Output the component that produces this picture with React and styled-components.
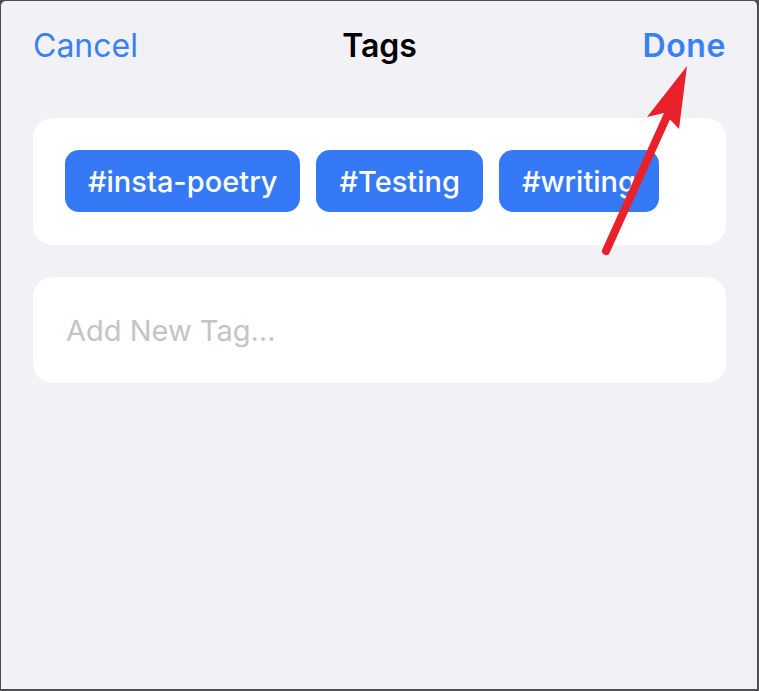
import React from "react";
import styled, { createGlobalStyle } from "styled-components";

const GlobalStyle = createGlobalStyle`
  html, body {
    margin: 0;
    padding: 0;
    background: #4d4d52;
  }
  * {
    box-sizing: border-box;
  }
`;

const tags = ["#insta-poetry", "#Testing", "#writing"];

function App() {
  return (
    <>
      <GlobalStyle />
      <Frame>
        <Header>
          <NavButton>Cancel</NavButton>
          <Title>Tags</Title>
          <NavButton $bold $right>
            Done
          </NavButton>
        </Header>
        <Card $pad="32px 32px 33px">
          <TagList>
            {tags.map((t) => (
              <Tag key={t}>{t}</Tag>
            ))}
          </TagList>
        </Card>
        <Card $pad="0 33px" $height="106px" $gap="32px">
          <TagInput placeholder="Add New Tag..." />
        </Card>
        <Arrow width="759" height="691" viewBox="0 0 759 691">
          <line
            x1="606"
            y1="251"
            x2="668"
            y2="114"
            stroke="#e8212b"
            strokeWidth="8"
            strokeLinecap="round"
          />
          <polygon points="687,66 647,117 664,113 679,129" fill="#e8212b" />
        </Arrow>
      </Frame>
    </>
  );
}

const Frame = styled.div`
  position: relative;
  width: 759px;
  height: 691px;
  background: #f2f1f6;
  border: 1px solid #4d4d52;
  border-right-width: 2px;
  border-bottom-width: 2px;
  border-radius: 6px 6px 0 0;
  padding: 0 31px 0 32px;
  font-family: Inter, "Noto Sans", sans-serif;
  overflow: hidden;
`;

const Header = styled.div`
  height: 89px;
  display: grid;
  grid-template-columns: 1fr auto 1fr;
  align-items: center;
  margin-bottom: 28px;
`;

const NavButton = styled.div`
  color: #3a80f5;
  font-size: 32px;
  font-weight: ${(p) => (p.$bold ? 600 : 400)};
  letter-spacing: ${(p) => (p.$bold ? "0.6px" : "0")};
  text-align: ${(p) => (p.$right ? "right" : "left")};
  cursor: pointer;
`;

const Title = styled.div`
  color: #000;
  font-size: 32px;
  font-weight: 600;
`;

const Card = styled.div`
  background: #fff;
  border-radius: 20px;
  padding: ${(p) => p.$pad};
  margin-top: ${(p) => p.$gap || "0"};
  height: ${(p) => p.$height || "auto"};
  display: flex;
  align-items: center;
`;

const TagList = styled.div`
  display: flex;
  flex-wrap: wrap;
  gap: 16px;
`;

const Tag = styled.div`
  height: 62px;
  padding: 0 23px;
  border-radius: 14px;
  background: #3579f6;
  color: #fff;
  font-size: 29px;
  font-weight: 500;
  display: flex;
  align-items: center;
`;

const TagInput = styled.input`
  flex: 1;
  border: none;
  outline: none;
  background: transparent;
  font-family: Inter, "Noto Sans", sans-serif;
  font-size: 29px;
  color: #000;
  padding: 0;

  &::placeholder {
    color: #c4c4c7;
  }
`;

const Arrow = styled.svg`
  position: absolute;
  left: -1px;
  top: -1px;
  pointer-events: none;
`;

export default App;
